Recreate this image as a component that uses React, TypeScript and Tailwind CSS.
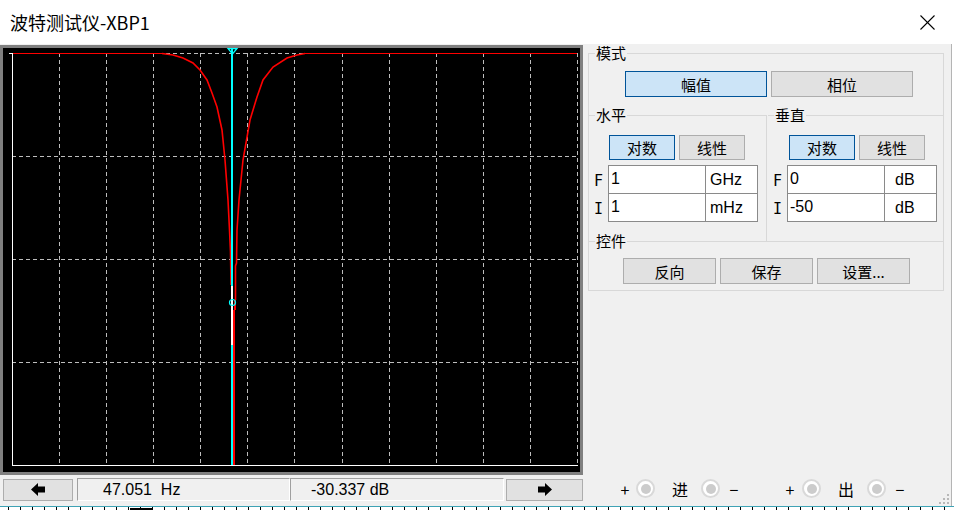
import React from "react";

const CJK = "font-['Noto_Sans_CJK_SC',sans-serif]";
const LAT = "font-['Liberation_Sans','Noto_Sans_CJK_SC',sans-serif]";

function Btn({ label, cls, active }: { label: string; cls: string; active?: boolean }) {
  return (
    <div
      className={
        (active ? "bg-[#cce4f7] border-[#005499] " : "bg-[#e1e1e1] border-[#adadad] ") +
        "border flex items-center justify-center text-[15px] leading-none text-black " +
        CJK +
        " " +
        cls
      }
    >
      {label}
    </div>
  );
}

function GroupLabel({ text }: { text: string }) {
  return (
    <span
      className={
        "absolute top-[-9px] left-[6px] px-[1px] bg-[#f0f0f0] text-[15px] leading-[16px] text-black " + CJK
      }
    >
      {text}
    </span>
  );
}

function InputRows({
  rows,
  unitCls,
}: {
  rows: { label: string; value: string; unit: string }[];
  unitCls: string;
}) {
  return (
    <div className="flex flex-col">
      {rows.map((r, i) => (
        <div key={i} className={"flex h-[29px] " + (i > 0 ? "-mt-[1px]" : "")}>
          <div className="w-[19px] flex items-center justify-center pt-[3px] text-[15px] text-black font-['DejaVu_Sans_Mono',monospace]">
            {r.label}
          </div>
          <div
            className={
              "w-[98px] h-[29px] border border-[#8a8a8a] bg-white pl-[2px] pb-[2px] flex items-center text-[16px] text-black " +
              LAT
            }
          >
            {r.value}
          </div>
          <div
            className={
              "w-[53px] h-[29px] -ml-[1px] border border-[#8a8a8a] bg-white flex items-start pt-[2px] text-[16px] text-black " +
              LAT +
              " " +
              unitCls
            }
          >
            {r.unit}
          </div>
        </div>
      ))}
    </div>
  );
}

function Radio() {
  return (
    <div className="w-[19px] h-[19px] rounded-full border-2 border-[#d9d9d9] bg-white flex items-center justify-center">
      <div className="w-[10px] h-[10px] rounded-full bg-[#cccccc]" />
    </div>
  );
}

function Plot() {
  const vx = [59, 106, 153, 200, 247, 294, 342, 389, 436, 483, 530, 577];
  const hy = [53, 156, 259, 362];
  const left =
    "162,53.5 173,55 183,58 193,63 200,70 207,80 212,93 217,107 222,130 225,160 228,200 229.5,230 230.5,252 231,285";
  const right =
    "305,53.5 297,55 287,58 273,67 263,80 257,97 250,120 243,160 239,200 237,230 236.5,263 235.5,266 235.5,300";
  return (
    <svg width={577} height={424} viewBox="3 48 577 424" className="block">
      <rect x={3} y={48} width={577} height={424} fill="#000" />
      <g shapeRendering="crispEdges">
        {vx.map((x) => (
          <line key={"v" + x} x1={x + 0.5} y1={53} x2={x + 0.5} y2={465} stroke="#bdbdbd" strokeDasharray="4 3" />
        ))}
        {hy.map((y) => (
          <line key={"h" + y} x1={12} y1={y + 0.5} x2={577} y2={y + 0.5} stroke="#bdbdbd" strokeDasharray="4 3" />
        ))}
        <line x1={12.5} y1={53} x2={12.5} y2={466} stroke="#fff" />
        <line x1={9} y1={53.5} x2={12} y2={53.5} stroke="#fff" />
        <line x1={12} y1={465.5} x2={578} y2={465.5} stroke="#fff" />
        <line x1={13} y1={53.5} x2={162} y2={53.5} stroke="#ff0000" strokeWidth={1.4} />
        <line x1={305} y1={53.5} x2={577} y2={53.5} stroke="#ff0000" strokeWidth={1.4} />
      </g>
      <polyline points={left} fill="none" stroke="#ff0000" strokeWidth={1.6} />
      <polyline points={right} fill="none" stroke="#ff0000" strokeWidth={1.6} />
      <g shapeRendering="crispEdges">
        <line x1={235} y1={300} x2={235} y2={310} stroke="#ff0000" strokeWidth={2} />
        <line x1={234} y1={310} x2={234} y2={465} stroke="#ff0000" strokeWidth={2} />
        <line x1={232} y1={48} x2={232} y2={465} stroke="#00ffff" strokeWidth={2} />
        <line x1={232} y1={286} x2={232} y2={345} stroke="#ffffff" strokeWidth={2} />
      </g>
      <polygon points="228,48.5 237,48.5 232.5,54" fill="none" stroke="#00ffff" strokeWidth={1.3} />
      <circle cx={232.5} cy={302.5} r={3} fill="none" stroke="#00ffff" strokeWidth={1.2} />
    </svg>
  );
}

function ArrowLeft() {
  return (
    <svg width={14} height={13} viewBox="0 0 14 13">
      <polygon points="0,6.5 7,0 7,3.5 14,3.5 14,9.5 7,9.5 7,13" fill="#000" />
    </svg>
  );
}
function ArrowRight() {
  return (
    <svg width={14} height={13} viewBox="0 0 14 13">
      <polygon points="14,6.5 7,0 7,3.5 0,3.5 0,9.5 7,9.5 7,13" fill="#000" />
    </svg>
  );
}

export default function App() {
  const ticks = Array.from({ length: 79 }, (_, i) => i);
  return (
    <div className="w-[954px] h-[510px] bg-white flex flex-col overflow-hidden">
      {/* title bar */}
      <div className="h-[44px] flex items-center justify-between pl-[10px] pr-[19px] bg-white">
        <span className={"text-[18px] text-black leading-none " + CJK}>波特测试仪-XBP1</span>
        <svg width={15} height={15} viewBox="0 0 15 15">
          <line x1={0.5} y1={0.5} x2={14.5} y2={14.5} stroke="#000" strokeWidth={1.1} />
          <line x1={14.5} y1={0.5} x2={0.5} y2={14.5} stroke="#000" strokeWidth={1.1} />
        </svg>
      </div>

      {/* body */}
      <div className="relative w-[952px] h-[462px] bg-[#f0f0f0] border-r border-[#b4b4b4] flex">
        {/* left column */}
        <div className="w-[584px] flex flex-col">
          <div className="mt-[1px] w-[583px] h-[430px] border-[3px] border-[#808080]">
            <Plot />
          </div>
          <div className="mt-[3px] h-[23px] flex items-center">
            <div className="ml-[3px] w-[70px] h-[22px] bg-[#e1e1e1] border border-[#adadad] flex items-center justify-center">
              <ArrowLeft />
            </div>
            <div
              className={
                "ml-[4px] w-[213px] h-[23px] border-l border-t border-[#a0a0a0] border-r border-r-white border-b border-b-white pl-[25px] flex items-center text-[16px] text-black whitespace-pre " +
                LAT
              }
            >
              47.051  Hz
            </div>
            <div
              className={
                "w-[214px] h-[23px] border-l border-t border-[#a0a0a0] border-r border-r-white border-b border-b-white pl-[20px] flex items-center text-[16px] text-black whitespace-pre " +
                LAT
              }
            >
              -30.337 dB
            </div>
            <div className="ml-[2px] w-[77px] h-[22px] bg-[#e1e1e1] border border-[#adadad] flex items-center justify-center">
              <ArrowRight />
            </div>
          </div>
        </div>

        {/* right column */}
        <div className="flex-1 flex flex-col">
          <div className="relative ml-[4px] mt-[9px] w-[356px] h-[238px] border border-[#d8d8d8] flex flex-col">
            <GroupLabel text="模式" />
            <div className="mt-[17px] pl-[36px] flex gap-[4px]">
              <Btn label="幅值" cls="w-[142px] h-[26px]" active />
              <Btn label="相位" cls="w-[142px] h-[26px]" />
            </div>
            <div className="mt-[18px] flex h-[126px]">
              <div className="relative w-[178px] border-t border-r border-[#d8d8d8] flex flex-col">
                <GroupLabel text="水平" />
                <div className="mt-[19px] pl-[20px] flex gap-[4px]">
                  <Btn label="对数" cls="w-[66px] h-[25px]" active />
                  <Btn label="线性" cls="w-[66px] h-[25px]" />
                </div>
                <div className="mt-[5px]">
                  <InputRows
                    unitCls="pl-[4px]"
                    rows={[
                      { label: "F", value: "1", unit: "GHz" },
                      { label: "I", value: "1", unit: "mHz" },
                    ]}
                  />
                </div>
              </div>
              <div className="relative flex-1 ml-[1px] border-t border-[#d8d8d8] flex flex-col">
                <GroupLabel text="垂直" />
                <div className="mt-[19px] pl-[21px] flex gap-[4px]">
                  <Btn label="对数" cls="w-[66px] h-[25px]" active />
                  <Btn label="线性" cls="w-[66px] h-[25px]" />
                </div>
                <div className="mt-[5px]">
                  <InputRows
                    unitCls="pl-[10px]"
                    rows={[
                      { label: "F", value: "0", unit: "dB" },
                      { label: "I", value: "-50", unit: "dB" },
                    ]}
                  />
                </div>
              </div>
            </div>
            <div className="relative flex-1 border-t border-[#d8d8d8] flex flex-col">
              <GroupLabel text="控件" />
              <div className="mt-[16px] pl-[34px] flex gap-[4px]">
                <Btn label="反向" cls="w-[93px] h-[26px]" />
                <Btn label="保存" cls="w-[93px] h-[26px]" />
                <Btn label="设置..." cls="w-[93px] h-[26px]" />
              </div>
            </div>
          </div>

          {/* bottom radio row */}
          <div className={"mt-[186px] h-[23px] flex items-center text-[16px] text-black " + CJK}>
            <span className="ml-[35px] w-[12px] text-center leading-none">+</span>
            <div className="ml-[5px]"><Radio /></div>
            <span className="ml-[17px] w-[16px] text-center leading-none">进</span>
            <div className="ml-[13px]"><Radio /></div>
            <span className="ml-[8px] w-[12px] text-center leading-none">−</span>
            <span className="ml-[44px] w-[12px] text-center leading-none">+</span>
            <div className="ml-[6px]"><Radio /></div>
            <span className="ml-[17px] w-[16px] text-center leading-none">出</span>
            <div className="ml-[13px]"><Radio /></div>
            <span className="ml-[8px] w-[12px] text-center leading-none">−</span>
          </div>
        </div>

        {/* resize grip */}
        <svg className="absolute right-[2px] bottom-[2px]" width={10} height={10} viewBox="0 0 10 10">
          <rect x={8} y={0} width={2} height={2} fill="#b8b8b8" />
          <rect x={4} y={4} width={2} height={2} fill="#b8b8b8" />
          <rect x={8} y={4} width={2} height={2} fill="#b8b8b8" />
          <rect x={0} y={8} width={2} height={2} fill="#b8b8b8" />
          <rect x={4} y={8} width={2} height={2} fill="#b8b8b8" />
          <rect x={8} y={8} width={2} height={2} fill="#b8b8b8" />
        </svg>
      </div>

      {/* background strip */}
      <div className="relative h-[4px] border-t border-[#3fa3b5] bg-white">
        <div className="flex gap-[11px] pl-[8px]">
          {ticks.map((i) => (
            <div key={i} className="w-[1px] h-[3px] bg-black" />
          ))}
        </div>
        <div className="absolute left-[130px] top-[1px] w-[23px] h-[3px] bg-black" />
      </div>
    </div>
  );
}
